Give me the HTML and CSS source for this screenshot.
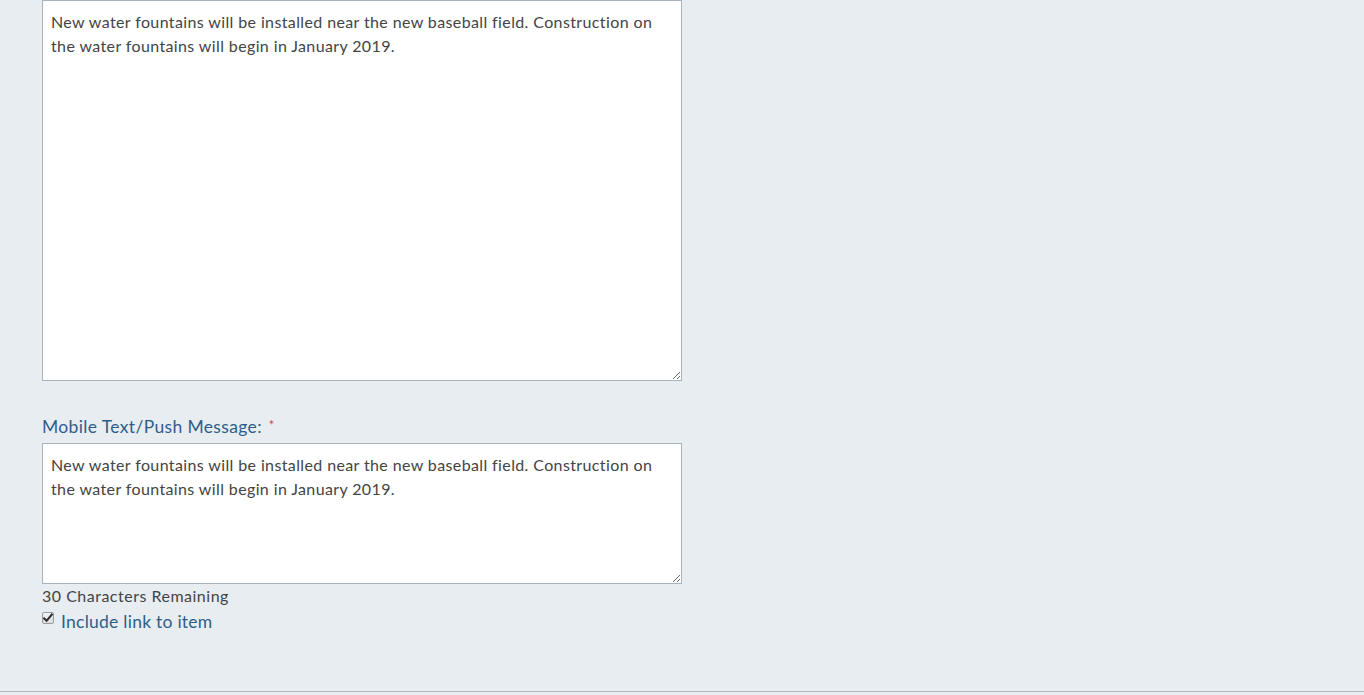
FILE: index.html
```html
<!DOCTYPE html>
<html lang="en">
<head>
<meta charset="utf-8">
<title>Message form</title>
<link rel="stylesheet" href="styles.css">
</head>
<body>
<main class="page">
  <div class="form">
    <textarea class="msg msg-large">New water fountains will be installed near the new baseball field. Construction on the water fountains will begin in January 2019.</textarea>

    <div class="field">
      <label class="field-label" for="mobile">Mobile Text/Push Message:<span class="req">*</span></label>
      <textarea id="mobile" class="msg msg-small">New water fountains will be installed near the new baseball field. Construction on the water fountains will begin in January 2019.</textarea>
      <div class="counter">30 Characters Remaining</div>
      <label class="check-row">
        <span class="check-wrap">
          <input type="checkbox" class="check" checked>
          <svg class="check-mark" viewBox="0 0 12 12" width="12" height="12" aria-hidden="true"><path d="M2.2 6.4 L4.6 8.8 L9.8 2.6" fill="none" stroke="#2f2f2f" stroke-width="2.1" stroke-linecap="square" stroke-linejoin="miter"/></svg>
        </span>
        <span class="check-text">Include link to item</span>
      </label>
    </div>
  </div>
  <div class="footer-line"></div>
</main>
</body>
</html>
```

FILE: styles.css
```css
html, body {
  margin: 0;
  padding: 0;
  background: #e8edf1;
}

body {
  font-family: "Lato", "Open Sans", sans-serif;
  color: #444444;
  height: 695px;
  overflow: hidden;
}

.page {
  display: flex;
  flex-direction: column;
  height: 695px;
}

.form {
  flex: 1;
  padding: 0 42px;
  display: flex;
  flex-direction: column;
  align-items: flex-start;
}

.msg {
  display: block;
  box-sizing: border-box;
  width: 640px;
  margin: 0;
  padding: 9px 8px;
  border: 1px solid #a9b3be;
  border-radius: 0;
  background: #ffffff;
  color: #444444;
  font-family: "Lato", "Open Sans", sans-serif;
  font-size: 16px;
  line-height: 24px;
  letter-spacing: 0.38px;
  resize: both;
  outline: none;
}

.msg-large {
  height: 381px;
}

.msg-small {
  height: 141px;
}

.field {
  margin-top: 34px;
  display: flex;
  flex-direction: column;
  align-items: flex-start;
}

.field-label {
  display: block;
  font-size: 17.5px;
  line-height: 24px;
  height: 24px;
  letter-spacing: 0.35px;
  color: #2e5e88;
  margin-bottom: 4px;
}

.req {
  position: relative;
  top: -3px;
  color: #d0453f;
  font-size: 13px;
  margin-left: 7px;
}

.counter {
  font-size: 16px;
  line-height: 24px;
  height: 24px;
  letter-spacing: 0.5px;
  color: #444444;
}

.check-row {
  display: flex;
  align-items: center;
  height: 25px;
  padding-top: 1px;
}

.check-wrap {
  position: relative;
  width: 12px;
  height: 12px;
  margin: 0 7px 7px 0;
}

.check {
  appearance: none;
  -webkit-appearance: none;
  box-sizing: border-box;
  display: block;
  width: 12px;
  height: 12px;
  margin: 0;
  border: 1px solid #9a9a9a;
  border-radius: 2px;
  background: linear-gradient(#f4f4f4, #dedede);
}

.check-mark {
  position: absolute;
  left: 0;
  top: 0;
  pointer-events: none;
}

.check-text {
  font-size: 17.5px;
  line-height: 25px;
  letter-spacing: 0.25px;
  color: #2e5e88;
}

.footer-line {
  height: 1px;
  background: #b3bac1;
  margin-bottom: 3px;
}
```
